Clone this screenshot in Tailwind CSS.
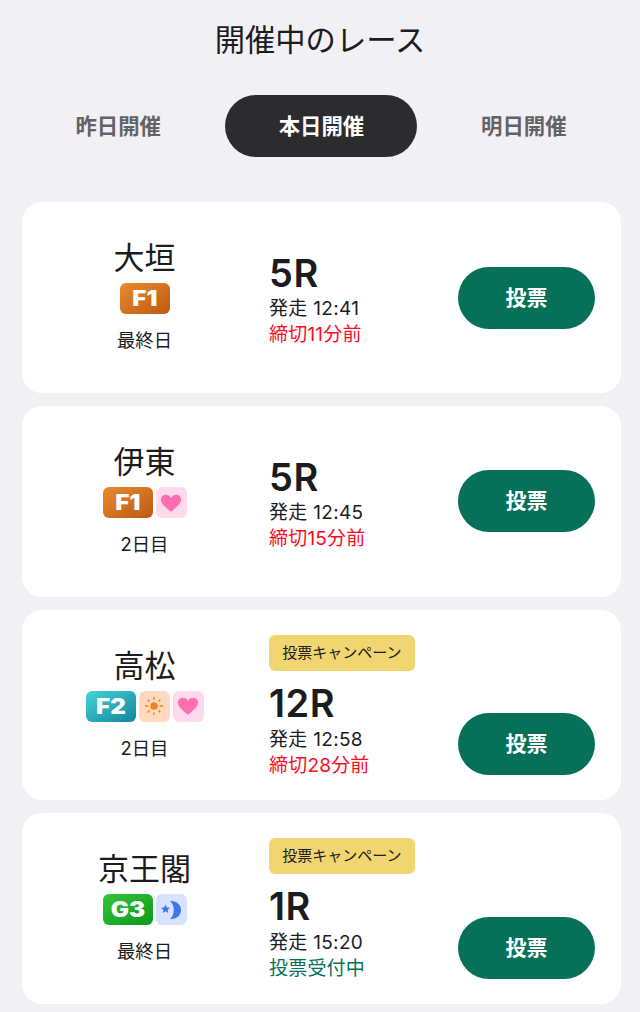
<!DOCTYPE html>
<html lang="ja">
<head>
<meta charset="utf-8">
<script src="https://cdn.jsdelivr.net/npm/@tailwindcss/browser@4"></script>
</head>
<body class="bg-[#f0f0f5] font-['Inter','Noto_Sans_CJK_JP',sans-serif] text-[#1c1c1e] overflow-hidden">
<div class="w-[640px] h-[1012px] overflow-hidden">
  <h1 class="pt-[18px] h-[95px] text-center text-[30.3px] leading-[44px] font-normal">開催中のレース</h1>
  <div class="grid grid-cols-3 w-[607px] ml-[17px] items-center text-[21.4px] font-bold text-[#636366]">
    <div class="text-center">昨日開催</div>
    <div class="h-[62px] w-[192px] mx-auto translate-x-[1px] rounded-full bg-[#2c2c2e] text-white flex items-center justify-center">本日開催</div>
    <div class="text-center translate-x-[1px]">明日開催</div>
  </div>
  <div class="mt-[45px] ml-[22px] w-[599px] flex flex-col gap-[13px]">

    <div class="h-[191px] bg-white rounded-[20px] flex">
      <div class="w-[245px] pb-[4px] flex flex-col items-center justify-center">
        <div class="text-[31px] leading-[40px] font-normal">大垣</div>
        <div class="flex gap-[3px] mt-[5px]">
          <div class="w-[50px] h-[31px] rounded-[6px] bg-gradient-to-br from-[#ea8a30] to-[#bd5a10] flex items-center justify-center text-white text-[21px] font-black leading-none"><span class="scale-x-[1.15]">F1</span></div>
        </div>
        <div class="text-[18.4px] leading-[26px] mt-[13px]">最終日</div>
      </div>
      <div class="flex-1 ml-[2px] pt-[2px] flex flex-col justify-center">
        <div class="text-[38px] leading-[46px] font-semibold tracking-[0.5px]">5R</div>
        <div class="text-[19px] leading-[26px] tracking-[0.3px]">発走 12:41</div>
        <div class="text-[19px] leading-[26px] tracking-[0.2px] text-[#ff0a1e]">締切11分前</div>
      </div>
      <div class="self-center w-[137px] h-[62px] mr-[26px] rounded-full bg-[#067158] text-white text-[21px] font-bold flex items-center justify-center">投票</div>
    </div>

    <div class="h-[191px] bg-white rounded-[20px] flex">
      <div class="w-[245px] pb-[4px] flex flex-col items-center justify-center">
        <div class="text-[31px] leading-[40px] font-normal">伊東</div>
        <div class="flex gap-[3px] mt-[5px]">
          <div class="w-[50px] h-[31px] rounded-[6px] bg-gradient-to-br from-[#ea8a30] to-[#bd5a10] flex items-center justify-center text-white text-[21px] font-black leading-none"><span class="scale-x-[1.15]">F1</span></div>
          <div class="w-[31px] h-[31px] rounded-[6px] bg-[#ffd9ec] flex items-center justify-center">
            <svg viewBox="0 0 24 24" class="w-[22px] h-[22px]"><path fill="#ff6fb0" d="M12 21.5 C5 16 1 12.5 1 8.2 C1 5 3.5 3 6.3 3 C8.6 3 10.8 4.2 12 6.6 C13.2 4.2 15.4 3 17.7 3 C20.5 3 23 5 23 8.2 C23 12.5 19 16 12 21.5 Z"/></svg>
          </div>
        </div>
        <div class="text-[18.4px] leading-[26px] mt-[13px]">2日目</div>
      </div>
      <div class="flex-1 ml-[2px] pt-[2px] flex flex-col justify-center">
        <div class="text-[38px] leading-[46px] font-semibold tracking-[0.5px]">5R</div>
        <div class="text-[19px] leading-[26px] tracking-[0.3px]">発走 12:45</div>
        <div class="text-[19px] leading-[26px] tracking-[0.2px] text-[#ff0a1e]">締切15分前</div>
      </div>
      <div class="self-center mb-[1px] w-[137px] h-[62px] mr-[26px] rounded-full bg-[#067158] text-white text-[21px] font-bold flex items-center justify-center">投票</div>
    </div>

    <div class="h-[190px] bg-white rounded-[20px] flex">
      <div class="w-[245px] pb-[4px] flex flex-col items-center justify-center">
        <div class="text-[31px] leading-[40px] font-normal">高松</div>
        <div class="flex gap-[3px] mt-[5px]">
          <div class="w-[50px] h-[31px] rounded-[6px] bg-gradient-to-br from-[#45d5da] to-[#0f869c] flex items-center justify-center text-white text-[21px] font-black leading-none"><span class="scale-x-[1.15]">F2</span></div>
          <div class="w-[31px] h-[31px] rounded-[6px] bg-[#ffd9c0] flex items-center justify-center">
            <svg viewBox="0 0 24 24" class="w-[20px] h-[20px]"><circle cx="12" cy="12" r="4.5" fill="#f5841f"/><g stroke="#f5841f" stroke-width="2" stroke-linecap="round"><path d="M12 2v1.5M12 20.5V22M2 12h2.5M19.5 12H22M5 5l1 1M18 18l1 1M5 19l1-1M18 6l1-1"/></g></svg>
          </div>
          <div class="w-[31px] h-[31px] rounded-[6px] bg-[#ffd9ec] flex items-center justify-center">
            <svg viewBox="0 0 24 24" class="w-[22px] h-[22px]"><path fill="#ff6fb0" d="M12 21.5 C5 16 1 12.5 1 8.2 C1 5 3.5 3 6.3 3 C8.6 3 10.8 4.2 12 6.6 C13.2 4.2 15.4 3 17.7 3 C20.5 3 23 5 23 8.2 C23 12.5 19 16 12 21.5 Z"/></svg>
          </div>
        </div>
        <div class="text-[18.4px] leading-[26px] mt-[13px]">2日目</div>
      </div>
      <div class="flex-1 ml-[2px] pt-[4px] flex flex-col justify-center">
        <div class="w-[146px] h-[36px] rounded-[6px] bg-[#f0d570] text-[15px] flex items-center justify-center mb-[10px]">投票キャンペーン</div>
        <div class="text-[38px] leading-[44px] mb-[2px] font-semibold tracking-[0.5px]">12R</div>
        <div class="text-[19px] leading-[26px] tracking-[0.3px]">発走 12:58</div>
        <div class="text-[19px] leading-[26px] tracking-[0.2px] text-[#ff0a1e]">締切28分前</div>
      </div>
      <div class="self-end mb-[25px] w-[137px] h-[62px] mr-[26px] rounded-full bg-[#067158] text-white text-[21px] font-bold flex items-center justify-center">投票</div>
    </div>

    <div class="h-[191px] bg-white rounded-[20px] flex">
      <div class="w-[245px] pb-[4px] flex flex-col items-center justify-center">
        <div class="text-[31px] leading-[40px] font-normal">京王閣</div>
        <div class="flex gap-[3px] mt-[5px]">
          <div class="w-[50px] h-[31px] rounded-[6px] bg-gradient-to-br from-[#33c63a] to-[#0b981b] flex items-center justify-center text-white text-[21px] font-black leading-none"><span class="scale-x-[1.15]">G3</span></div>
          <div class="w-[31px] h-[31px] rounded-[6px] bg-[#d6e2ff] flex items-center justify-center">
            <svg viewBox="0 0 24 24" class="w-[24px] h-[24px]"><path fill="#3b78e6" d="M11 3 C17.5 2.5 22 7 22 12 C22 17.5 17.5 21.5 11 21 C13.5 19 14.8 16 14.8 12 C14.8 8.5 13.5 5 11 3 Z"/><path fill="#3b78e6" d="M6.5 6.5l1.3 3 3.2.3-2.4 2.1.7 3.1-2.8-1.7-2.8 1.7.7-3.1L2 9.8l3.2-.3z"/></svg>
          </div>
        </div>
        <div class="text-[18.4px] leading-[26px] mt-[13px]">最終日</div>
      </div>
      <div class="flex-1 ml-[2px] pt-[3px] flex flex-col justify-center">
        <div class="w-[146px] h-[36px] rounded-[6px] bg-[#f0d570] text-[15px] flex items-center justify-center mb-[10px]">投票キャンペーン</div>
        <div class="text-[38px] leading-[44px] mb-[2px] font-semibold tracking-[0.5px]">1R</div>
        <div class="text-[19px] leading-[26px] tracking-[0.3px]">発走 15:20</div>
        <div class="text-[19px] leading-[26px] tracking-[0.2px] text-[#067158]">投票受付中</div>
      </div>
      <div class="self-end mb-[25px] w-[137px] h-[62px] mr-[26px] rounded-full bg-[#067158] text-white text-[21px] font-bold flex items-center justify-center">投票</div>
    </div>
  </div>
</div>
</body>
</html>
